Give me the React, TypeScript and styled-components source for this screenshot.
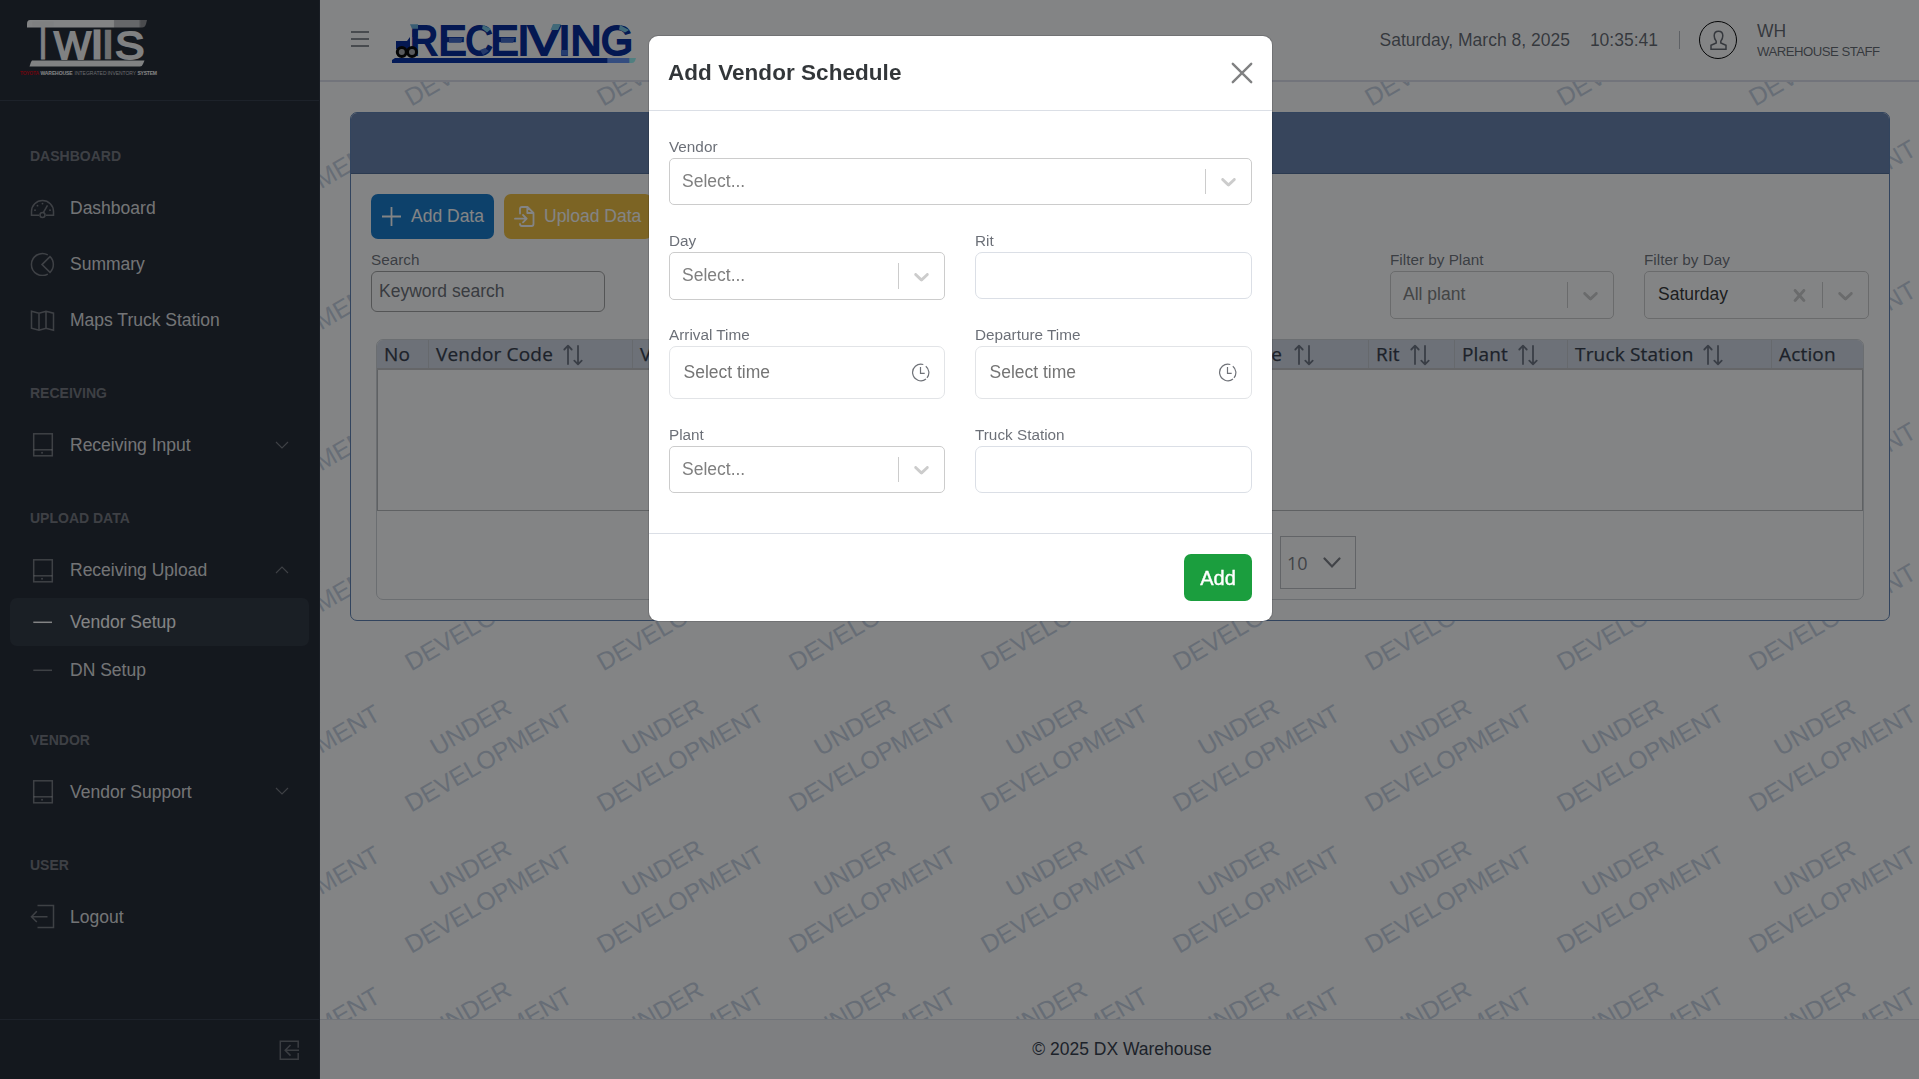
import React from 'react';
import styled, { createGlobalStyle } from 'styled-components';

const sans = '"Liberation Sans", Arial, sans-serif';
const tableFont = '"Open Sans", "Noto Sans", sans-serif';

const GlobalStyle = createGlobalStyle`
  *, *::before, *::after { box-sizing: border-box; }
  html, body { margin: 0; height: 100%; overflow: hidden; }
  body { font-family: ${sans}; font-size: 17.5px; line-height: 1.5; color: #323a49; background: #fff; }
`;

/* ---------- shell ---------- */
const Shell = styled.div`
  display: flex;
  width: 1919px;
  height: 1079px;
  overflow: hidden;
`;
const Sidebar = styled.aside`
  display: flex;
  flex-direction: column;
  flex: 0 0 320px;
  background: #212631;
  border-right: 1px solid #2b303c;
  color: rgba(255, 255, 255, 0.87);
`;
const Brand = styled.div`
  height: 101px;
  padding: 16px 0 0 18px;
  border-bottom: 1px solid #323a49;
`;
const Nav = styled.nav`
  flex: 1;
  display: flex;
  flex-direction: column;
  padding: 9px 10px 0;
`;
const NavTitle = styled.div`
  flex: 0 0 69.2px;
  padding: 36px 20px 0;
  font-size: 14px;
  line-height: 21px;
  font-weight: 700;
  text-transform: uppercase;
  color: rgba(255, 255, 255, 0.38);
`;
const NavItem = styled.a<{ $sub?: boolean; $active?: boolean }>`
  display: flex;
  align-items: center;
  gap: 15px;
  flex: 0 0 ${p => (p.$sub ? 48 : 56)}px;
  padding: 1px 20px 0;
  border-radius: 7px;
  background: ${p => (p.$active ? '#2d343e' : 'transparent')};
  color: ${p => (p.$active ? '#fff' : 'rgba(255,255,255,.87)')};
  svg { flex: none; color: ${p => (p.$active ? '#fff' : 'rgba(255,255,255,.38)')}; }
`;
const NavLabel = styled.span`
  flex: 1;
  padding-top: 1px;
  white-space: nowrap;
`;
const SidebarFooter = styled.div`
  display: flex;
  align-items: center;
  justify-content: flex-end;
  height: 60px;
  padding: 2px 19px 0 0;
  border-top: 1px solid #323a49;
  color: rgba(255, 255, 255, 0.34);
`;
const Main = styled.div`
  flex: 1;
  display: flex;
  flex-direction: column;
  min-width: 0;
`;
const Topbar = styled.header`
  position: relative;
  display: flex;
  align-items: center;
  height: 82px;
  padding: 0 39px 0 31px;
  background: #fff;
  border-bottom: 2px solid #dcdfea;
  color: rgba(37, 43, 54, 0.72);
`;
const LogoSlot = styled.div`
  display: flex;
  margin: 8px auto 0 22px;
`;
const DateText = styled.span`
  margin-right: 20px;
`;
const Clock = styled.span`
  margin-right: 21px;
`;
const Rule = styled.span`
  width: 1px;
  height: 18px;
  margin-right: 19px;
  background: #b5b8be;
`;
const Avatar = styled.div`
  display: grid;
  place-items: center;
  width: 38px;
  height: 38px;
  margin-right: 20px;
  border: 1.3px solid #000;
  border-radius: 50%;
`;
const UserName = styled.div`
  display: flex;
  flex-direction: column;
  width: 123px;
  padding-top: 3px;
  line-height: 21px;
  white-space: nowrap;
`;
const Role = styled.span`
  font-size: 13.2px;
  line-height: 20px;
  letter-spacing: -0.52px;
`;
const Content = styled.main`
  position: relative;
  flex: 1;
  padding: 30px 29px 0 30px;
  overflow: hidden;
`;
const Watermark = styled.svg`
  position: absolute;
  inset: 0;
`;
const PageFooter = styled.footer`
  display: flex;
  align-items: center;
  justify-content: center;
  height: 60px;
  padding: 0 0 0 5px;
  border-top: 1px solid #dbdfe6;
  background: #f5f5f6;
  color: #323a49;
`;

/* ---------- card ---------- */
const Card = styled.section`
  position: relative;
  height: 509px;
  border: 1px solid #5d7fb0;
  border-radius: 7px;
  background: #fff;
  overflow: hidden;
`;
const CardHead = styled.div`
  height: 61px;
  background: #6680ac;
  border-bottom: 1px solid #4f6a94;
`;
const CardBody = styled.div`
  display: flex;
  flex-direction: column;
  padding: 20px 20px 0;
`;
const ButtonRow = styled.div`
  display: flex;
  gap: 10px;
`;
const ToolButton = styled.button<{ $bg: string; $width: number }>`
  display: flex;
  align-items: center;
  gap: 9px;
  width: ${p => p.$width}px;
  height: 45px;
  padding: 0 0 0 10px;
  border: 0;
  border-radius: 7px;
  background: ${p => p.$bg};
  color: #fff;
  font: 17.5px ${sans};
  white-space: nowrap;
`;
const FilterRow = styled.div`
  display: flex;
  gap: 30px;
  margin-top: 10px;
`;
const Field = styled.div<{ $width?: number; $push?: boolean }>`
  display: flex;
  flex-direction: column;
  width: ${p => (p.$width ? p.$width + 'px' : 'auto')};
  margin-right: ${p => (p.$push ? 'auto' : '0')};
`;
const Label = styled.label`
  flex: none;
  height: 22px;
  font-size: 15.3px;
  line-height: 21px;
  color: rgba(37, 43, 54, 0.68);
`;
const SearchBox = styled.div`
  display: flex;
  align-items: center;
  height: 41px;
  padding: 0 7px;
  border: 1px solid #a0a0a0;
  border-radius: 6px;
  color: #6a6d74;
`;
const SelectBox = styled.div<{ $h?: number }>`
  display: flex;
  align-items: center;
  flex: 0 0 ${p => p.$h ?? 47}px;
  border: 1px solid #ccc;
  border-radius: 5px;
  background: #fff;
`;
const SelectText = styled.span<{ $filled?: boolean }>`
  flex: 1;
  padding: 0 12px 1px ${p => (p.$filled ? 13 : 12)}px;
  color: ${p => (p.$filled ? '#333' : '#808080')};
`;
const SelectRule = styled.span`
  width: 1px;
  align-self: stretch;
  margin: 10px 0;
  background: #ccc;
`;
const Indicator = styled.span`
  display: flex;
  padding: 0 10px;
  color: #ccc;
`;
const TextInput = styled.div<{ $h: number; $grey?: boolean }>`
  display: flex;
  align-items: center;
  justify-content: space-between;
  flex: 0 0 ${p => p.$h}px;
  padding: 0 14.5px 1px 13.5px;
  border: 1px solid ${p => (p.$grey ? '#e2e4e7' : '#dbdfe6')};
  border-radius: 7px;
  background: #fff;
  color: #757575;
`;

/* ---------- table ---------- */
const Table = styled.div`
  display: flex;
  flex-direction: column;
  height: 261px;
  margin: 20px 5px 0 5px;
  border: 1px solid #cfd2d6;
  border-radius: 7px;
  overflow: hidden;
`;
const HeadRow = styled.div`
  display: flex;
  height: 30px;
  background: #d3d9e4;
  border-bottom: 2px solid #c2c2c4;
`;
const HeadCell = styled.div<{ $w: number }>`
  display: flex;
  align-items: center;
  gap: 10px;
  flex: 0 0 ${p => p.$w}px;
  padding: 0 0 1px 7px;
  border-right: 1px solid #c5c8ce;
  font: 500 19px/28px ${tableFont};
  color: #323a49;
  white-space: nowrap;
  &:last-child { border-right: 0; }
  svg { margin-top: 3px; }
`;
const HeadText = styled.span<{ $w: number }>`
  width: ${p => p.$w}px;
  letter-spacing: 0.17px;
  -webkit-text-stroke: 0.25px currentColor;
`;
const EmptyBody = styled.div`
  height: 141px;
  border: 1px solid #b6b8ba;
  border-top: 0;
`;
const Paginator = styled.div`
  flex: 1;
  display: flex;
  align-items: flex-start;
  padding: 25px 0 0 903px;
`;
const PageSize = styled.div`
  display: flex;
  align-items: center;
  gap: 15px;
  width: 76px;
  height: 53px;
  padding: 0 0 0 6px;
  border: 1px solid #bdbfc2;
  font: 18px ${tableFont};
  color: #7a7d84;
`;

/* ---------- modal ---------- */
const Backdrop = styled.div`
  position: fixed;
  inset: 0;
  padding: 36px 0 0 649px;
  background: rgba(8, 10, 12, 0.5);
`;
const Dialog = styled.div`
  display: flex;
  flex-direction: column;
  width: 623px;
  height: 585px;
  border-radius: 9px;
  background: #fff;
  box-shadow: 0 0 0 1px rgba(8, 10, 12, 0.14);
`;
const DialogHead = styled.div`
  display: flex;
  align-items: center;
  justify-content: space-between;
  height: 75px;
  padding: 0 19px 0;
  border-bottom: 1px solid #dbdfe6;
`;
const DialogTitle = styled.h5`
  margin: 0;
  padding-bottom: 1px;
  font-size: 22.5px;
  font-weight: 700;
  letter-spacing: 0.05px;
  color: rgba(20, 24, 28, 0.87);
`;
const DialogBody = styled.div`
  flex: 1;
  display: grid;
  grid-template-columns: 276px 277px;
  grid-template-rows: 69px 69px 75px 69px;
  gap: 25px 30px;
  padding: 25px 20px;
`;
const Wide = styled.div`
  display: flex;
  flex-direction: column;
  grid-column: 1 / -1;
`;
const DialogFoot = styled.div`
  display: flex;
  align-items: flex-start;
  justify-content: flex-end;
  height: 88px;
  padding: 20px 20px 0;
  border-top: 1px solid #dbdfe6;
`;
const AddButton = styled.button`
  width: 68px;
  height: 47px;
  padding: 1px 0 0;
  border: 0;
  border-radius: 7px;
  background: #1b9e3e;
  color: #fff;
  font: 20px ${sans};
  -webkit-text-stroke: 0.4px #fff;
`;

/* ---------- icons ---------- */
const line = { fill: 'none', stroke: 'currentColor', strokeWidth: 1.5 } as const;

const Speedometer = () => (
  <svg width="25" height="24" viewBox="0 0 25 24" {...line}>
    <path d="M9 19.3H1.5V15.5a11 11 0 0 1 22 0v3.8H16M13.6 16.2 17.5 9.3" />
    <circle cx="12.5" cy="19" r="2.5" />
    <g fill="currentColor" stroke="none">
      <circle cx="12.5" cy="7.6" r="0.9" /><circle cx="7.5" cy="9.7" r="0.9" />
      <circle cx="5" cy="14.2" r="0.9" /><circle cx="20" cy="14.2" r="0.9" />
    </g>
  </svg>
);
const Pie = () => (
  <svg width="25" height="24" viewBox="0 0 25 24" {...line}>
    <path d="M17.8 2.9A11 11 0 1 0 17.8 22.1M20 4.6 12 12.6l8 7.8a11 11 0 0 0 0-15.8Z" />
  </svg>
);
const MapIcon = () => (
  <svg width="25" height="24" viewBox="0 0 25 24" {...line}>
    <path d="M1.5 3.2 9 5.2l7-2 7.5 2v17l-7.5-2-7 2-7.5-2ZM9 5.2v17M16 3.2v17" />
  </svg>
);
const Tablet = () => (
  <svg width="25" height="25" viewBox="0 0 25 25" {...line}>
    <rect x="3.7" y="1.8" width="18.6" height="22" />
    <path d="M3.7 17.8h18.6" />
    <rect x="11.2" y="19.9" width="1.7" height="1.7" fill="currentColor" stroke="none" />
  </svg>
);
const Dash = () => (
  <svg width="25" height="24" viewBox="0 0 25 24" {...line}><path d="M3.3 12.3H22" /></svg>
);
const LogoutIcon = () => (
  <svg width="25" height="25" viewBox="0 0 25 25" {...line}>
    <path d="M7.5 1.5h16v22h-16M17.5 12.7H1.7M6.8 7.2 1.5 12.7l5.3 5.3" />
  </svg>
);
const NavChevron = ({ up }: { up?: boolean }) => (
  <svg width="14" height="8" viewBox="0 0 14 8" fill="none" stroke="currentColor" strokeWidth="1.1">
    <path d={up ? 'M1 7 7 1l6 6' : 'M1 1l6 6 6-6'} />
  </svg>
);
const CollapseIcon = () => (
  <svg width="21" height="21" viewBox="0 0 21 21" {...line}>
    <path d="M19.2 7.7V1.3H1.3v18h17.9v-6.4M20 10.3H6.2M11.5 5 6.2 10.3l5.3 5.3" />
  </svg>
);
const Burger = () => (
  <svg width="18" height="18" viewBox="0 0 18 18" {...line}><path d="M0 1h18M0 8h18M0 15h18" /></svg>
);
const Person = () => (
  <svg width="18" height="22" viewBox="0 0 18 22" fill="none" stroke="currentColor" strokeWidth="1.5">
    <path d="M9.500 2.200C6.800 2.200 5.200 4 5.200 6.700c0 2.300.7 4 2 5.500V14L2 16.300V20.300H17V16.300L11.800 14V12.200c1.300-1.500 2-3.200 2-5.500 0-2.700-1.600-4.500-4.300-4.500Z" />
  </svg>
);
const Plus = () => (
  <svg width="21" height="21" viewBox="0 0 21 21" fill="none" stroke="currentColor" strokeWidth="1.8">
    <path d="M10.500 1v19M1 10.500h19" />
  </svg>
);
const FileIn = () => (
  <svg width="21" height="21" viewBox="0 0 21 21" fill="none" stroke="currentColor" strokeWidth="1.8" strokeLinejoin="round" strokeLinecap="round">
    <path d="M6 7.500V3q0-2 2-2h5.500l6 6v11q0 2-2 2H8q-2 0-2-2M13.300 1.300V7h5.700M1 12.700h11.500M9 9l3.700 3.700L9 16.400" />
  </svg>
);
const Caret = () => (
  <svg width="25" height="25" viewBox="0 0 20 20" fill="currentColor">
    <path d="M4.516 7.548c0.436-0.446 1.043-0.481 1.576 0l3.908 3.747 3.908-3.747c0.533-0.481 1.141-0.446 1.574 0 0.436 0.445 0.408 1.197 0 1.615-0.406 0.418-4.695 4.502-4.695 4.502-0.217 0.223-0.502 0.335-0.787 0.335s-0.57-0.112-0.789-0.335c0 0-4.287-4.084-4.695-4.502s-0.436-1.170 0-1.615z" />
  </svg>
);
const Cross = () => (
  <svg width="25" height="25" viewBox="0 0 20 20" fill="currentColor">
    <path d="M14.348 14.849c-0.469 0.469-1.229 0.469-1.697 0l-2.651-3.030-2.651 3.029c-0.469 0.469-1.229 0.469-1.697 0-0.469-0.469-0.469-1.229 0-1.697l2.758-3.150-2.759-3.152c-0.469-0.469-0.469-1.228 0-1.697s1.228-0.469 1.697 0l2.652 3.031 2.651-3.031c0.469-0.469 1.228-0.469 1.697 0s0.469 1.229 0 1.697l-2.758 3.152 2.758 3.150c0.469 0.469 0.469 1.229 0 1.698z" />
  </svg>
);
const SortIcon = () => (
  <svg width="20" height="22" viewBox="0 0 20 22" fill="none" stroke="#6b7280" strokeWidth="1.8" strokeLinecap="round" strokeLinejoin="round">
    <path d="M5 20V2M1.300 5.500 5 1.700l3.700 3.800M15 2v18M11.300 16.700 15 20.300l3.700-3.600" />
  </svg>
);
const ClockIcon = () => (
  <svg width="19" height="19" viewBox="0 0 19 19" fill="none" stroke="#6f7278" strokeWidth="1.200">
    <path d="M12.300 1.500A8.300 8.300 0 1 0 15 16M9.500 4v6.300h4.200M14.800 3.200a8.300 8.300 0 0 1 1.200 11.700" />
  </svg>
);
const CloseIcon = () => (
  <svg width="22" height="22" viewBox="0 0 22 22" fill="none" stroke="#808182" strokeWidth="2.400" strokeLinecap="round">
    <path d="M1.800 1.800l18.400 18.400M20.200 1.800 1.800 20.200" />
  </svg>
);
const PageCaret = () => (
  <svg width="18" height="12" viewBox="0 0 18 12" fill="none" stroke="#7a7d84" strokeWidth="2.200" strokeLinecap="round">
    <path d="M1.500 1.500 9 9.500l7.500-8" />
  </svg>
);

/* ---------- logos ---------- */
const TwiisLogo = () => (
  <svg width="150" height="64" viewBox="18 16 150 64" fontFamily={sans}>
    <defs>
      <linearGradient id="steel">
        <stop offset="0.720" stopColor="#fff" /><stop offset="0.730" stopColor="#c4c4c8" />
        <stop offset="0.930" stopColor="#c4c4c8" /><stop offset="0.950" stopColor="#8c8c90" />
      </linearGradient>
    </defs>
    <path d="M30 20H147L146 24Q145 27.500 142 27.500H27V24Q27 20 30 20Z" fill="url(#steel)" />
    <path d="M32 60.500H144.500L143 64Q142 66.500 140 66.500H29.500L31 62Z" fill="#fafafa" />
    <g fill="#f8f8f8" stroke="#f8f8f8" strokeWidth="1.800" fontSize="39.500">
      <text y="59" x="32" fontSize="54" strokeWidth="1" textLength="22" lengthAdjust="spacingAndGlyphs">T</text>
      <text y="58.500" x="54" textLength="37" lengthAdjust="spacingAndGlyphs">W</text>
      <text y="57.500" x="91.500" strokeWidth="3">I</text>
      <text y="57.500" x="102.500" fill="#d2d2d4" stroke="#d2d2d4" strokeWidth="2.400">I</text>
      <text y="58.500" x="115" textLength="29.500" lengthAdjust="spacingAndGlyphs">S</text>
    </g>
    <g fontSize="5" fontWeight="700" fill="#c8c8cc">
      <text x="20" y="75.300" fill="#d00010" textLength="19">TOYOTA</text>
      <text x="40.500" y="75.300" fill="#fff" textLength="32">WAREHOUSE</text>
      <text x="74.500" y="75.300" fontWeight="400" textLength="32">INTEGRATED</text>
      <text x="107.500" y="75.300" fontWeight="400" textLength="28.500">INVENTORY</text>
      <text x="137.500" y="75.300" fill="#fff" textLength="19.500">SYSTEM</text>
    </g>
  </svg>
);
const letters: [string, number, number][] = [
  ['R', 411, 28], ['E', 439.500, 28], ['C', 466.500, 27], ['E', 491.500, 28], ['I', 518.500, 12],
  ['V', 529, 32], ['I', 559.500, 12], ['N', 571.500, 31], ['G', 602, 32],
];
const ReceivingLogo = () => (
  <svg width="246" height="42" viewBox="392 24 246 42" fontFamily={sans}>
    <defs>
      <linearGradient id="road">
        <stop offset="0.880" stopColor="#002ca4" /><stop offset="0.885" stopColor="#6090f4" />
        <stop offset="0.970" stopColor="#6090f4" /><stop offset="0.975" stopColor="#98f4f4" />
      </linearGradient>
    </defs>
    <path d="M396 59H637L636 62Q635 64 633 64H393V61Z" fill="url(#road)" />
    <g fontSize="42" fill="#002698" stroke="#002698" strokeWidth="2.200">
      {letters.map(([c, x, w], i) => (
        <text key={i} x={x} y="55.600" textLength={w} lengthAdjust="spacingAndGlyphs">{c}</text>
      ))}
    </g>
    <path d="M411 25.200h8v4.500h-6Z" fill="#68b0dc" />
    <path d="M450 38.700h14l-2 5h-12ZM502 38.700h14l-2 5h-12ZM481 51l5-2 4 3-6 4Z" fill="#4068c8" />
    <path d="M484 26l8 4-4 3.500-5-4ZM554 25h8l-3 6h-7.500ZM621 26l9 5-4 2.500-6-3Z" fill="#78c8e4" />
    <path d="M562 51h7v5.600h-7Z" fill="#4470d4" />
    <path d="M397 42h11l3-4v12h-14ZM413.500 31h5v7h-5Z" fill="#002698" />
    <g fill="#a8aaae" stroke="#000" strokeWidth="3">
      <circle cx="402.800" cy="53" r="4.500" /><circle cx="413" cy="53" r="4.500" />
    </g>
  </svg>
);

/* ---------- composed parts ---------- */
const columnsAcross = Array.from({ length: 9 }, (_, i) => i - 1);
const rowsDown = Array.from({ length: 8 }, (_, i) => i);
const WatermarkLayer = () => (
  <Watermark width="1599" height="937" fontFamily={sans} fontSize="24.9" fill="#c6d1e0">
    {rowsDown.map(r =>
      columnsAcross.map(c => (
        <g key={`${r}-${c}`} transform={`translate(${91.200 + c * 192} ${24.800 + r * 141.200}) rotate(-30)`}>
          <text x="50" y="-36.200">UNDER</text>
          <text>DEVELOPMENT</text>
        </g>
      ))
    )}
  </Watermark>
);

const Select = ({ text, filled, clearable, h }: { text: string; filled?: boolean; clearable?: boolean; h?: number }) => (
  <SelectBox $h={h}>
    <SelectText $filled={filled}>{text}</SelectText>
    {clearable && <Indicator><Cross /></Indicator>}
    <SelectRule />
    <Indicator><Caret /></Indicator>
  </SelectBox>
);

const columns: { name: string; w: number; text: number; sort?: boolean }[] = [
  { name: 'No', w: 52, text: 30 },
  { name: 'Vendor Code', w: 204, text: 117, sort: true },
  { name: 'Vendor Name', w: 220, text: 124, sort: true },
  { name: 'Day', w: 100, text: 36, sort: true },
  { name: 'Arrival Time', w: 180, text: 114, sort: true },
  { name: 'Departure Time', w: 236, text: 144, sort: true },
  { name: 'Rit', w: 86, text: 24, sort: true },
  { name: 'Plant', w: 113, text: 46, sort: true },
  { name: 'Truck Station', w: 204, text: 118, sort: true },
  { name: 'Action', w: 91, text: 60 },
];

export default function App() {
  return (
    <>
      <GlobalStyle />
      <Shell>
        <Sidebar>
          <Brand><TwiisLogo /></Brand>
          <Nav>
            <NavTitle>Dashboard</NavTitle>
            <NavItem><Speedometer /><NavLabel>Dashboard</NavLabel></NavItem>
            <NavItem><Pie /><NavLabel>Summary</NavLabel></NavItem>
            <NavItem><MapIcon /><NavLabel>Maps Truck Station</NavLabel></NavItem>
            <NavTitle>Receiving</NavTitle>
            <NavItem><Tablet /><NavLabel>Receiving Input</NavLabel><NavChevron /></NavItem>
            <NavTitle>Upload Data</NavTitle>
            <NavItem><Tablet /><NavLabel>Receiving Upload</NavLabel><NavChevron up /></NavItem>
            <NavItem $sub $active><Dash /><NavLabel>Vendor Setup</NavLabel></NavItem>
            <NavItem $sub><Dash /><NavLabel>DN Setup</NavLabel></NavItem>
            <NavTitle>Vendor</NavTitle>
            <NavItem><Tablet /><NavLabel>Vendor Support</NavLabel><NavChevron /></NavItem>
            <NavTitle>User</NavTitle>
            <NavItem><LogoutIcon /><NavLabel>Logout</NavLabel></NavItem>
          </Nav>
          <SidebarFooter><CollapseIcon /></SidebarFooter>
        </Sidebar>
        <Main>
          <Topbar>
            <Burger />
            <LogoSlot><ReceivingLogo /></LogoSlot>
            <DateText>Saturday, March 8, 2025</DateText>
            <Clock>10:35:41</Clock>
            <Rule />
            <Avatar><Person /></Avatar>
            <UserName>
              <span>WH</span>
              <Role>WAREHOUSE STAFF</Role>
            </UserName>
          </Topbar>
          <Content>
            <WatermarkLayer />
            <Card>
              <CardHead />
              <CardBody>
                <ButtonRow>
                  <ToolButton $bg="#1278ca" $width={123}><Plus />Add Data</ToolButton>
                  <ToolButton $bg="#f0be3c" $width={148}><FileIn />Upload Data</ToolButton>
                </ButtonRow>
                <FilterRow>
                  <Field $width={234} $push>
                    <Label>Search</Label>
                    <SearchBox>Keyword search</SearchBox>
                  </Field>
                  <Field $width={224}>
                    <Label>Filter by Plant</Label>
                    <Select text="All plant" h={48} />
                  </Field>
                  <Field $width={225}>
                    <Label>Filter by Day</Label>
                    <Select text="Saturday" filled clearable h={48} />
                  </Field>
                </FilterRow>
                <Table>
                  <HeadRow>
                    {columns.map(c => (
                      <HeadCell key={c.name} $w={c.w}>
                        <HeadText $w={c.text}>{c.name}</HeadText>
                        {c.sort && <SortIcon />}
                      </HeadCell>
                    ))}
                  </HeadRow>
                  <EmptyBody />
                  <Paginator>
                    <PageSize>10<PageCaret /></PageSize>
                  </Paginator>
                </Table>
              </CardBody>
            </Card>
          </Content>
          <PageFooter>© 2025 DX Warehouse</PageFooter>
        </Main>
      </Shell>
      <Backdrop>
        <Dialog>
          <DialogHead>
            <DialogTitle>Add Vendor Schedule</DialogTitle>
            <CloseIcon />
          </DialogHead>
          <DialogBody>
            <Wide>
              <Label>Vendor</Label>
              <Select text="Select..." />
            </Wide>
            <Field>
              <Label>Day</Label>
              <Select text="Select..." h={48} />
            </Field>
            <Field>
              <Label>Rit</Label>
              <TextInput $h={47} />
            </Field>
            <Field>
              <Label>Arrival Time</Label>
              <TextInput $h={53} $grey>Select time<ClockIcon /></TextInput>
            </Field>
            <Field>
              <Label>Departure Time</Label>
              <TextInput $h={53} $grey>Select time<ClockIcon /></TextInput>
            </Field>
            <Field>
              <Label>Plant</Label>
              <Select text="Select..." />
            </Field>
            <Field>
              <Label>Truck Station</Label>
              <TextInput $h={47} />
            </Field>
          </DialogBody>
          <DialogFoot>
            <AddButton>Add</AddButton>
          </DialogFoot>
        </Dialog>
      </Backdrop>
    </>
  );
}
